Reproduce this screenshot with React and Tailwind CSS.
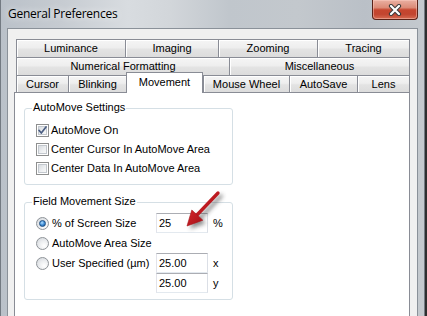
import React from "react";

function Tab({ className = "", children, last }) {
  return (
    <div
      className={`${className} h-full flex items-center justify-center border-t border-l ${last ? "border-r" : ""} border-[#898c95] bg-[linear-gradient(#f5f5f5,#eeeeee_45%,#e3e3e3_55%,#dcdcdc)] shadow-[inset_1px_1px_0_#ffffff] text-[11px] leading-none text-black whitespace-nowrap`}
    >
      {children}
    </div>
  );
}

function GroupBox({ title, className = "", children }) {
  return (
    <div className={`relative ml-[9px] w-[209px] border border-[#d5dfe5] rounded-[3px] ${className}`}>
      <span className="absolute left-[7px] -top-[8px] bg-white px-[1px] leading-[13px] text-[11px] text-black">
        {title}
      </span>
      {children}
    </div>
  );
}

function Check({ checked }) {
  return (
    <div className="relative w-[13px] h-[13px] shrink-0 border border-[#8e8f8f] bg-white p-[1px]">
      <div className="w-full h-full border border-[#c3c8ce] bg-[linear-gradient(135deg,#d8dce1,#eef0f2_60%,#f8f8f8)]"></div>
      {checked && (
        <svg className="absolute left-0 top-0" width="11" height="11" viewBox="0 0 11 11">
          <path d="M2 5.3 L4.3 8 L9 2" fill="none" stroke="#4a5d82" strokeWidth="1.7" strokeLinecap="round" strokeLinejoin="round" />
        </svg>
      )}
    </div>
  );
}

function CheckRow({ checked, label }) {
  return (
    <div className="h-[19px] flex items-center pl-[11px] gap-[2px] text-[11px] text-black whitespace-nowrap">
      <Check checked={checked} />
      <span>{label}</span>
    </div>
  );
}

function Radio({ checked }) {
  return (
    <div className="w-[13px] h-[13px] shrink-0 rounded-full border border-[#8e9398] bg-[radial-gradient(circle_at_65%_70%,#ffffff,#eceef0_45%,#cfd3d8)] flex items-center justify-center">
      {checked && (
        <div className="w-[7px] h-[7px] rounded-full border border-[#1d4f83] bg-[radial-gradient(circle_at_40%_35%,#b4e0ff,#3f8ed8_50%,#154f8c)]"></div>
      )}
    </div>
  );
}

function Opt({ checked, label }) {
  return (
    <div className="flex items-center pl-[11px] gap-[3px] text-[11px] text-black whitespace-nowrap">
      <Radio checked={checked} />
      <span>{label}</span>
    </div>
  );
}

function Field({ value }) {
  return (
    <div className="w-[52px] h-[20px] border border-[#abadb3] border-l-[#e2e3ea] border-r-[#dbdfe6] border-b-[#e3e9ef] bg-white flex items-center pl-[2px] text-[11px] text-black">
      {value}
    </div>
  );
}

export default function App() {
  return (
    <div className="relative w-[427px] h-[316px] overflow-hidden bg-[#2e2e2e] font-['Liberation_Sans',Arial,sans-serif]">
      <div className="w-[425px] h-[330px] border-l border-r border-[#737a82] bg-[linear-gradient(90deg,#bac1c9_0%,#c6cbd1_14%,#d8dce0_30%,#d2d6da_40%,#c0c6cc_54%,#c3c8cd_70%,#bac0c7_86%,#c4c9ce_100%)]">
        {/* title bar */}
        <div className="h-[28px] flex items-start">
          <span className="pl-[7px] mt-[6px] leading-[16px] text-[12px] text-black font-['Open_Sans',sans-serif] tracking-[-0.25px] [text-shadow:0_0_7px_rgba(255,255,255,0.95)]">
            General Preferences
          </span>
          <div className="ml-auto mr-[6px] w-[46px] h-[20px] rounded-b-[4px] border border-t-0 border-[#5a2218] bg-[linear-gradient(#eab0a2,#dc8b77_40%,#c6462f_52%,#c24530_75%,#d66b52)] shadow-[inset_0_0_0_1px_rgba(255,210,200,0.45)] flex items-center justify-center">
            <svg width="14" height="12" viewBox="0 0 14 12">
              <path d="M3 2 L11 10 M11 2 L3 10" stroke="#3b3b3b" strokeWidth="4.2" strokeLinecap="round" />
              <path d="M3 2 L11 10 M11 2 L3 10" stroke="#ffffff" strokeWidth="2.2" strokeLinecap="round" />
            </svg>
          </div>
        </div>

        {/* client area */}
        <div className="ml-[6px] w-[411px] h-[300px] border border-[#8a9199] bg-[#f0f0f0] pt-[10px] pl-[6px]">
          {/* tab strip */}
          <div className="ml-[2px] w-[394px]">
            <div className="h-[18px] flex">
              <Tab className="w-[109px]">Luminance</Tab>
              <Tab className="w-[93px]">Imaging</Tab>
              <Tab className="w-[99px]">Zooming</Tab>
              <Tab className="w-[93px]" last>Tracing</Tab>
            </div>
            <div className="h-[18px] flex">
              <Tab className="w-[213px]">Numerical Formatting</Tab>
              <Tab className="w-[181px]" last>Miscellaneous</Tab>
            </div>
            <div className="h-[17px] flex items-start">
              <Tab className="w-[52px]">Cursor</Tab>
              <Tab className="w-[58px]">Blinking</Tab>
              <div className="relative z-10 -mt-[3px] w-[77px] h-[21px] bg-white border-t border-l border-r border-[#898c95] flex items-center justify-center pb-[2px] text-[11px] leading-none text-black">
                Movement
              </div>
              <Tab className="w-[86px]">Mouse Wheel</Tab>
              <Tab className="w-[68px]">AutoSave</Tab>
              <Tab className="w-[53px]" last>Lens</Tab>
            </div>
          </div>

          {/* tab page */}
          <div className="w-[396px] h-[240px] border border-[#898c95] bg-white pt-[15px]">
            <GroupBox title="AutoMove Settings" className="pt-[12px] pb-[6px]">
              <CheckRow checked label="AutoMove On" />
              <CheckRow label="Center Cursor In AutoMove Area" />
              <CheckRow label="Center Data In AutoMove Area" />
            </GroupBox>

            <GroupBox title="Field Movement Size" className="mt-[17px] pt-[10px] pb-[6px]">
              <div className="grid grid-cols-[131px_52px_auto] grid-rows-[20px_20px_20px_20px]">
                <Opt checked label="% of Screen Size" />
                <Field value="25" />
                <span className="pl-[5px] flex items-center text-[11px] text-black">%</span>

                <Opt label="AutoMove Area Size" />
                <div></div>
                <div></div>

                <Opt label="User Specified (µm)" />
                <Field value="25.00" />
                <span className="pl-[5px] flex items-center text-[11px] text-black">x</span>

                <div></div>
                <Field value="25.00" />
                <span className="pl-[5px] flex items-center text-[11px] text-black">y</span>
              </div>
            </GroupBox>
          </div>
        </div>
      </div>

      {/* annotation arrow */}
      <svg className="absolute left-0 top-0 pointer-events-none" width="427" height="316" viewBox="0 0 427 316">
        <defs>
          <filter id="arrowBlur" x="-50%" y="-50%" width="200%" height="200%">
            <feGaussianBlur stdDeviation="2" />
          </filter>
          <linearGradient id="arrowFill" x1="0" y1="0" x2="1" y2="1">
            <stop offset="0" stopColor="#d6262b" />
            <stop offset="1" stopColor="#a30f16" />
          </linearGradient>
        </defs>
        <g filter="url(#arrowBlur)" opacity="0.6" transform="translate(3 3)">
          <line x1="218" y1="193" x2="197" y2="215" stroke="#3c3c3c" strokeWidth="3.5" strokeLinecap="round" />
          <polygon points="187,226 191.8,210 202.8,220.2" fill="#3c3c3c" />
        </g>
        <line x1="218" y1="193" x2="196" y2="216" stroke="url(#arrowFill)" strokeWidth="3.3" strokeLinecap="round" />
        <polygon points="187,226 191.8,210 202.8,220.2" fill="url(#arrowFill)" stroke="#a8121a" strokeWidth="0.6" strokeLinejoin="round" />
      </svg>
    </div>
  );
}
